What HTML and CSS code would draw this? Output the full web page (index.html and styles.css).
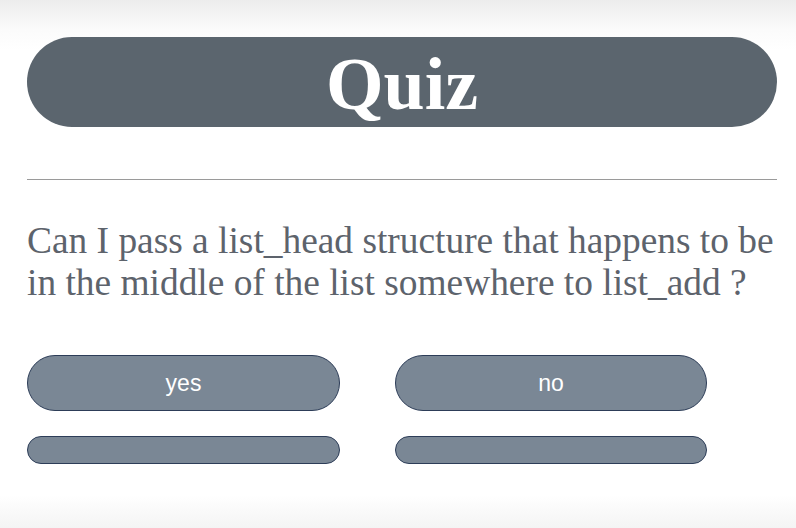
FILE: index.html
```html
<!DOCTYPE html>
<html>
<head>
<meta charset="utf-8">
<link rel="stylesheet" href="styles.css">
</head>
<body>
<main class="quiz">
  <header class="banner"><h1 class="title">Quiz</h1></header>
  <hr class="rule">
  <p class="question">Can I pass a list_head structure that happens to be in the middle of the list somewhere to list_add ?</p>
  <div class="answers">
    <button class="answer">yes</button>
    <button class="answer">no</button>
    <button class="answer slim"></button>
    <button class="answer slim"></button>
  </div>
</main>
</body>
</html>
```
FILE: styles.css
```css
html, body {
  margin: 0;
  padding: 0;
  height: 100%;
}
body {
  background: linear-gradient(#ececec 0px, #fbfbfb 30px, #ffffff 50px, #ffffff 495px, #f4f4f4 528px);
  font-family: "Liberation Serif", "Times New Roman", serif;
}
.quiz {
  width: 750px;
  padding: 37px 0 0 27px;
}
.banner {
  height: 90px;
  border-radius: 45px;
  background: #5b656e;
  display: flex;
  align-items: center;
  justify-content: center;
}
.title {
  margin: 0;
  color: #ffffff;
  font-family: "Liberation Serif", "Times New Roman", serif;
  font-weight: bold;
  font-size: 74px;
  line-height: 1;
  padding-top: 4px;
}
.rule {
  margin: 52px 0 0 0;
  border: 0;
  height: 1px;
  background: #9a9a9a;
}
.question {
  margin: 40px 0 0 0;
  font-size: 37.4px;
  line-height: 42px;
  color: #5d636c;
}
.answers {
  margin-top: 51px;
  display: grid;
  grid-template-columns: 313px 312px;
  column-gap: 55px;
  row-gap: 25px;
}
.answer {
  height: 56px;
  border-radius: 28px;
  border: 1px solid #2d3d58;
  background: #7a8795;
  color: #ffffff;
  font-family: "Liberation Sans", Arial, sans-serif;
  font-size: 23px;
  padding: 0;
  margin: 0;
}
.answer.slim {
  height: 28px;
  border-radius: 14px;
}
```
